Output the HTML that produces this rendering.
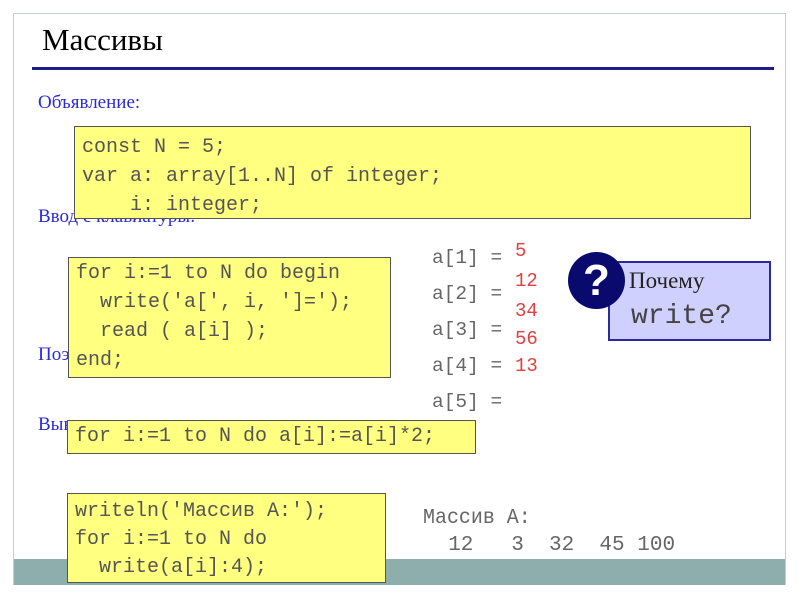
<!DOCTYPE html>
<html><head><meta charset="utf-8"><style>
body{margin:0;width:800px;height:600px;background:#fff;position:relative;overflow:hidden;font-family:"Liberation Serif",serif}
.a{position:absolute}
.frame{left:13px;top:13px;width:773px;height:572px;border:1px solid #c8cfcf;box-sizing:border-box}
.bar{left:14px;top:559px;width:771px;height:26px;background:#8eaead}
.t{left:42px;top:22px;font-size:31px;color:#000}
.line{left:32px;top:67px;width:742px;height:3px;background:#1c1c8c}
.lb{font-size:19px;color:#2a2ad8;left:38px}
.box{background:#ffff80;border:1px solid #555;box-sizing:border-box;font-family:"Liberation Mono",monospace;font-size:20px;color:#555;white-space:pre;padding-left:7px}
.m{font-family:"Liberation Mono",monospace;font-size:19.5px;color:#666;white-space:pre}
.r{font-family:"Liberation Mono",monospace;font-size:19px;color:#e04040;left:515px}
</style></head><body>
<div class="a frame"></div>
<div class="a bar"></div>
<div class="a t">Массивы</div>
<div class="a line"></div>
<div class="a lb" style="top:92px">Объявление:</div>
<div class="a lb" style="top:206px">Ввод с клавиатуры:</div>
<div class="a lb" style="top:344px">Поэлементные операции:</div>
<div class="a lb" style="top:414px">Вывод на экран:</div>
<div class="a box" style="left:74px;top:126px;width:677px;height:93px;line-height:29px;padding-top:6px">const N = 5;
var a: array[1..N] of integer;
    i: integer;</div>
<div class="a box" style="left:68px;top:257px;width:323px;height:121px;line-height:29px;padding-top:1px">for i:=1 to N do begin
  write('a[', i, ']=');
  read ( a[i] );
end;</div>
<div class="a box" style="left:67px;top:420px;width:409px;height:34px;line-height:32px">for i:=1 to N do a[i]:=a[i]*2;</div>
<div class="a box" style="left:67px;top:493px;width:319px;height:90px;line-height:28px;padding-top:4px">writeln('Массив A:');
for i:=1 to N do
  write(a[i]:4);</div>
<div class="a m" style="left:432px;top:247px">a[1] =</div>
<div class="a m" style="left:432px;top:283px">a[2] =</div>
<div class="a m" style="left:432px;top:319px">a[3] =</div>
<div class="a m" style="left:432px;top:355px">a[4] =</div>
<div class="a m" style="left:432px;top:391px">a[5] =</div>
<div class="a r" style="top:240px">5</div>
<div class="a r" style="top:270px">12</div>
<div class="a r" style="top:300px">34</div>
<div class="a r" style="top:328px">56</div>
<div class="a r" style="top:355px">13</div>
<div class="a" style="left:608px;top:261px;width:163px;height:80px;background:#d0d0ff;border:2px solid #2a2a9c;box-sizing:border-box"></div>
<div class="a" style="left:629px;top:268px;font-size:23px;color:#222">Почему</div>
<div class="a m" style="left:631px;top:301px;font-size:28px;color:#444">write?</div>
<div class="a" style="left:568px;top:252px;width:57px;height:57px;border-radius:50%;background:#0a0a6e;color:#fff;font-family:'Liberation Sans',sans-serif;font-weight:bold;font-size:44px;text-align:center;line-height:57px">?</div>
<div class="a m" style="left:423px;top:507px;font-size:21px;transform:scaleX(.95);transform-origin:left">Массив A:</div>
<div class="a m" style="left:423px;top:534px;font-size:21px;transform:scaleX(1.0);transform-origin:left">  12   3  32  45 100</div>
</body></html>
